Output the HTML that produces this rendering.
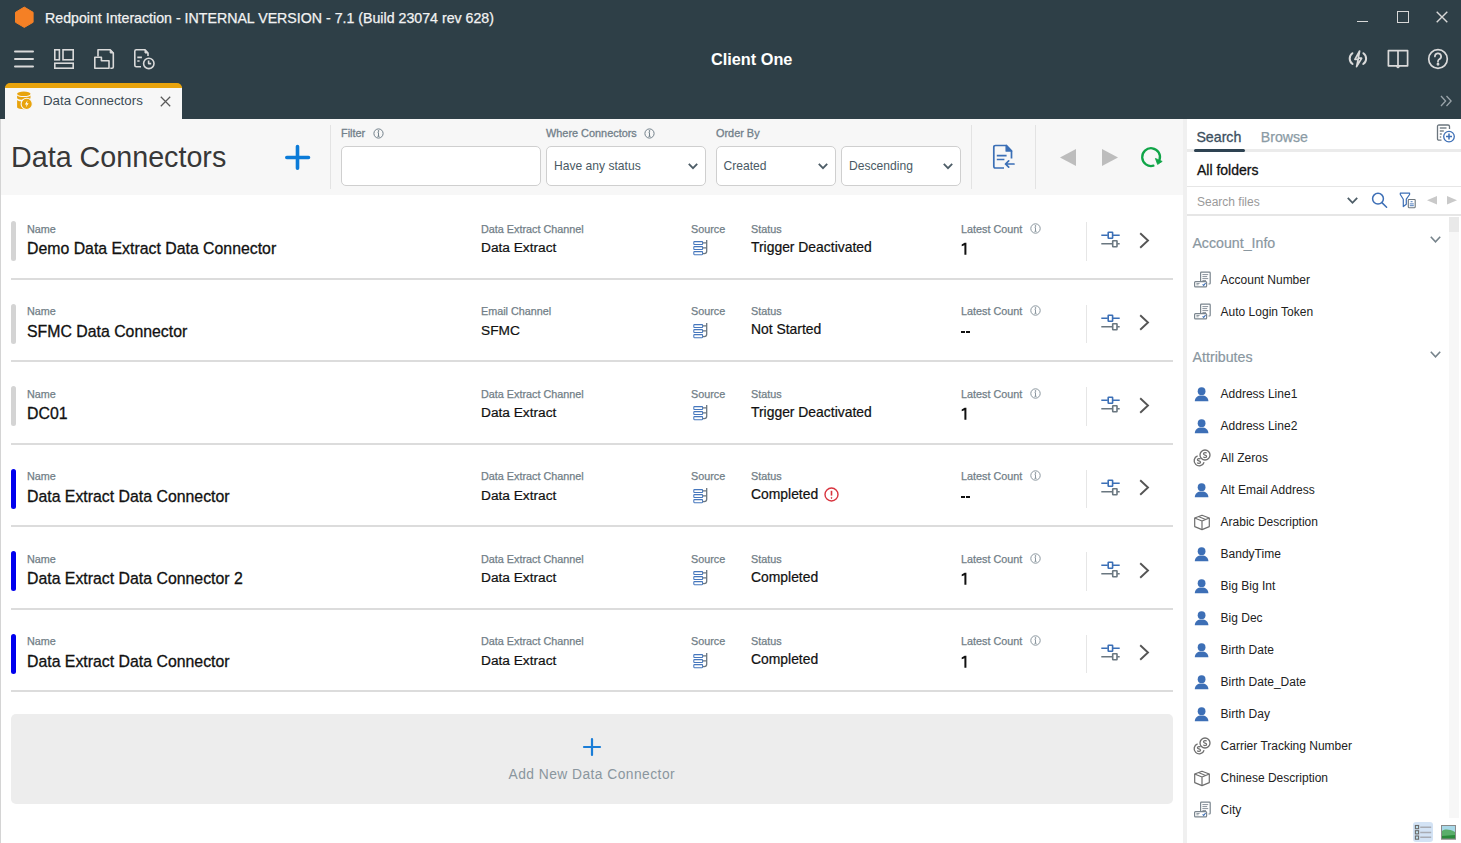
<!DOCTYPE html>
<html><head><meta charset="utf-8">
<style>
*{margin:0;padding:0;box-sizing:border-box}
html,body{width:1461px;height:843px;overflow:hidden}
body{position:relative;background:#2e3f47;font-family:"Liberation Sans",sans-serif}
.a{position:absolute}
.t{position:absolute;white-space:nowrap;line-height:1}
.m{-webkit-text-stroke:0.3px currentColor}
.m2{-webkit-text-stroke:0.22px currentColor}
svg{position:absolute;overflow:visible}
</style></head><body>
<svg style="left:14px;top:6px" width="20" height="23" viewBox="0 0 20 23"><polygon points="10.3,1.1 19.1,6.3 19.1,16.3 10.3,21.4 1.5,16.3 1.5,6.3" fill="#f58025" stroke="#f58025" stroke-width="1" stroke-linejoin="round"/></svg>
<div class="t" id="title" style="left:45px;top:11.28px;font-size:14.2px;color:#f2f2f2;-webkit-text-stroke:0.25px #f2f2f2">Redpoint Interaction - INTERNAL VERSION - 7.1 (Build 23074 rev 628)</div>
<div class="a" style="left:1357px;top:20.7px;width:11px;height:1.4px;background:#d8d8d8"></div>
<div class="a" style="left:1397px;top:11px;width:11.5px;height:11.5px;border:1.4px solid #d8d8d8"></div>
<svg style="left:1436px;top:11px" width="12" height="12" viewBox="0 0 12 12"><path d="M0.7 0.7L11.3 11.3M11.3 0.7L0.7 11.3" stroke="#d8d8d8" stroke-width="1.4"/></svg>
<svg style="left:14px;top:50px" width="20" height="18" viewBox="0 0 20 18"><path d="M1 1.6H19M1 9H19M1 16.5H19" stroke="#dadada" stroke-width="2" stroke-linecap="round"/></svg>
<svg style="left:53px;top:48px" width="22" height="22" viewBox="0 0 22 22" fill="none" stroke="#dadada" stroke-width="1.6"><rect x="1.8" y="1.8" width="4.6" height="10"/><rect x="10" y="1.8" width="10.2" height="10"/><rect x="1.8" y="15.2" width="18.4" height="5"/></svg>
<svg style="left:93px;top:48px" width="22" height="22" viewBox="0 0 22 22" fill="none" stroke="#dadada" stroke-width="1.6" stroke-linejoin="round"><path d="M5 8.5V1.8H17.2L20.3 5V19Q20.3 20.2 19 20.2H17.3"/><path d="M17.2 1.8V5H20.3Z" fill="#dadada" stroke-width="1"/><path d="M1.8 9.2H8.4V12.8H16V20.2H1.8Z"/></svg>
<svg style="left:133px;top:48px" width="23" height="22" viewBox="0 0 23 22" fill="none" stroke="#dadada" stroke-width="1.6" stroke-linejoin="round"><path d="M8 18.8H3.3Q1.8 18.8 1.8 17.3V3.3Q1.8 1.8 3.3 1.8H12L15 5V8"/><path d="M12 1.8V5H15Z" fill="#dadada" stroke-width="1"/><path d="M4.3 9.4H8.9M4.3 13H6.6"/><circle cx="15.8" cy="15.4" r="5.2"/><path d="M15.6 12.4V15.6H18.2"/></svg>
<div class="t" id="client" style="left:711px;top:50.80px;font-size:16.3px;color:#ffffff;font-weight:bold">Client One</div>
<svg style="left:1347px;top:49px" width="23" height="20" viewBox="0 0 23 20" fill="none" stroke="#dadada" stroke-width="2" stroke-linecap="round" stroke-linejoin="round"><path d="M5.4 4.2A6.6 6.6 0 0 0 5.6 15"/><path d="M16.4 4.2A6.6 6.6 0 0 1 16.2 15"/><path d="M12.6 2L7.9 10.3H11.2L9.6 17.6L14.6 9.2H11.3Z" stroke-width="1.7"/></svg>
<svg style="left:1387px;top:49px" width="22" height="20" viewBox="0 0 22 20" fill="none" stroke="#dadada" stroke-width="1.7" stroke-linejoin="round"><path d="M1.4 1.6H20.6V16.8H1.4Z"/><path d="M11 1.6V16.8"/><path d="M9.4 17.2L11 18.6L12.6 17.2" stroke-width="1.4"/></svg>
<svg style="left:1427px;top:48px" width="22" height="22" viewBox="0 0 22 22" fill="none" stroke="#dadada" stroke-width="1.7"><circle cx="11" cy="11" r="9.3"/><path d="M7.9 8.5A3.1 3.1 0 1 1 12.3 11.3C11.4 11.8 11 12.3 11 13.3V13.8" stroke-linecap="round"/><circle cx="11" cy="16.3" r="0.6" fill="#dadada"/></svg>
<div class="a" style="left:5px;top:83px;width:177px;height:36px;background:#f7f7f7;border-top:5px solid #e8a30c;border-radius:5px 5px 0 0"></div>
<svg style="left:16px;top:91px" width="18" height="20" viewBox="0 0 18 20"><ellipse cx="7.8" cy="2.8" rx="6.7" ry="2.3" fill="#e8a30c"/><path d="M1.1 4.6C2.5 6.6 13.1 6.6 14.5 4.6V7.2C13.1 9.2 2.5 9.2 1.1 7.2Z" fill="#e8a30c"/><path d="M1.1 9.1C2.5 11 9 11 11 10.5V17.8C9 18.5 2.5 18.4 1.1 16.6Z" fill="#e8a30c"/><circle cx="10.7" cy="12.9" r="5.6" fill="#e8a30c" stroke="#f7f7f7" stroke-width="1.1"/><path d="M11.6 9.3L8.9 13.4H10.7L9.8 16.6L12.6 12.3H10.8Z" fill="#fff"/></svg>
<div class="t" id="tabtxt" style="left:43px;top:94.44px;font-size:13.3px;color:#3b4b55;">Data Connectors</div>
<svg style="left:160px;top:95.6px" width="11" height="11" viewBox="0 0 11 11"><path d="M0.8 0.8L10.2 10.2M10.2 0.8L0.8 10.2" stroke="#5a5a5a" stroke-width="1.25"/></svg>
<svg style="left:1440px;top:95px" width="13" height="12" viewBox="0 0 13 12" fill="none" stroke="#9aa4aa" stroke-width="1.3"><path d="M1 1L5.6 6L1 11M6.5 1L11.1 6L6.5 11"/></svg>
<div class="a" style="left:0;top:119px;width:1183px;height:724px;background:#fff"></div>
<div class="a" style="left:0;top:119px;width:1.2px;height:724px;background:#d4d4d4"></div>
<div class="a" style="left:1.2px;top:119px;width:1181.8px;height:76px;background:#f7f7f7"></div>
<div class="a" style="left:1183px;top:119px;width:4px;height:724px;background:#f0f0f0"></div>
<div class="a" style="left:1187px;top:119px;width:274px;height:724px;background:#fff"></div>
<div class="t" id="heading" style="left:11px;top:142.61px;font-size:28.7px;color:#383838;">Data Connectors</div>
<svg style="left:284px;top:143.6px" width="27" height="27" viewBox="0 0 27 27" stroke="#0b7bd8" stroke-width="3.6" stroke-linecap="round"><path d="M13.5 2.6V24.3M2.8 13.5H24.5"/></svg>
<div class="a" style="left:329.5px;top:125px;width:1.2px;height:64px;background:#e3e3e3"></div>
<div class="t" id="lbl_filter" style="left:341px;top:128.07px;font-size:10.9px;color:#72808a;-webkit-text-stroke:0.3px #72808a">Filter</div>
<svg style="left:373px;top:128px" width="11" height="11" viewBox="0 0 11 11" fill="none" stroke="#72808a" stroke-width="1"><circle cx="5.5" cy="5.5" r="4.6"/><path d="M5.5 4.6V8.3M4.5 8.3H6.5M4.6 4.6H5.5" stroke-width="1"/><circle cx="5.5" cy="3" r="0.45" fill="#72808a"/></svg>
<div class="t" id="lbl_where" style="left:546px;top:127.77px;font-size:10.9px;color:#72808a;-webkit-text-stroke:0.3px #72808a">Where Connectors</div>
<svg style="left:643.5px;top:128px" width="11" height="11" viewBox="0 0 11 11" fill="none" stroke="#72808a" stroke-width="1"><circle cx="5.5" cy="5.5" r="4.6"/><path d="M5.5 4.6V8.3M4.5 8.3H6.5M4.6 4.6H5.5" stroke-width="1"/><circle cx="5.5" cy="3" r="0.45" fill="#72808a"/></svg>
<div class="t" id="lbl_order" style="left:716px;top:127.77px;font-size:10.9px;color:#72808a;-webkit-text-stroke:0.3px #72808a">Order By</div>
<div class="a" style="left:341px;top:146px;width:200px;height:40px;background:#fff;border:1px solid #cfcfcf;border-radius:5px"></div>
<div class="a" style="left:545.5px;top:146px;width:160px;height:40px;background:#fff;border:1px solid #cfcfcf;border-radius:5px"></div>
<div class="t" id="sel1" style="left:554px;top:160.26px;font-size:12.1px;color:#4a5a64;">Have any status</div>
<svg style="left:688px;top:162.5px" width="10" height="6" viewBox="0 0 10 6" fill="none" stroke="#4d5d67" stroke-width="1.8"><path d="M0.8 0.8L5.0 5.2L9.2 0.8"/></svg>
<div class="a" style="left:715.5px;top:146px;width:120.5px;height:40px;background:#fff;border:1px solid #cfcfcf;border-radius:5px"></div>
<div class="t" id="sel2" style="left:723.5px;top:160.26px;font-size:12.1px;color:#4a5a64;">Created</div>
<svg style="left:818px;top:162.5px" width="10" height="6" viewBox="0 0 10 6" fill="none" stroke="#4d5d67" stroke-width="1.8"><path d="M0.8 0.8L5.0 5.2L9.2 0.8"/></svg>
<div class="a" style="left:840.5px;top:146px;width:120px;height:40px;background:#fff;border:1px solid #cfcfcf;border-radius:5px"></div>
<div class="t" id="sel3" style="left:849px;top:160.26px;font-size:12.1px;color:#4a5a64;">Descending</div>
<svg style="left:942.5px;top:162.5px" width="10" height="6" viewBox="0 0 10 6" fill="none" stroke="#4d5d67" stroke-width="1.8"><path d="M0.8 0.8L5.0 5.2L9.2 0.8"/></svg>
<div class="a" style="left:970.5px;top:125px;width:1.2px;height:64px;background:#e3e3e3"></div>
<div class="a" style="left:1035px;top:125px;width:1.2px;height:64px;background:#e3e3e3"></div>
<svg style="left:992px;top:144px" width="23" height="26" viewBox="0 0 23 26" fill="none" stroke="#3b6fb6" stroke-width="1.7" stroke-linejoin="round"><path d="M19.5 14.5V7L14.3 1.5H3.5Q1.8 1.5 1.8 3.2V22.3Q1.8 24 3.5 24H12"/><path d="M14.3 1.5V7H19.5Z" fill="#3b6fb6"/><path d="M4.8 11.7H14.6M4.8 15.5H12.4"/><path d="M22 20H13.5M16.7 16.8L13.5 20L16.7 23.2" stroke-linecap="round"/></svg>
<svg style="left:1060px;top:149px" width="16" height="17" viewBox="0 0 16 17"><path d="M16 0V17L0 8.5Z" fill="#bdbdbd"/></svg>
<svg style="left:1101.5px;top:149px" width="16" height="17" viewBox="0 0 16 17"><path d="M0 0V17L16 8.5Z" fill="#bdbdbd"/></svg>
<svg style="left:1140px;top:146px" width="24" height="22" viewBox="0 0 24 22" fill="none"><path d="M13.4 19.7A8.9 8.9 0 1 1 19.5 14" stroke="#10a548" stroke-width="2.3" stroke-linecap="round"/><path d="M15.4 12.4L22.2 15.4L17.6 18.4Z" fill="#10a548" stroke="#10a548" stroke-width="0.8" stroke-linejoin="round"/></svg>
<div class="a" style="left:10.8px;top:221.4px;width:5.6px;height:40px;background:#d4d4d4;border-radius:3px"></div>
<div class="t" id="r0_lbl" style="left:27px;top:223.56px;font-size:10.8px;color:#717e87;-webkit-text-stroke:0.25px #717e87">Name</div>
<div class="t m" id="r0_name" style="left:27px;top:241.38px;font-size:15.85px;color:#111;">Demo Data Extract Data Connector</div>
<div class="t" id="r0_chl" style="left:481px;top:223.56px;font-size:10.8px;color:#717e87;-webkit-text-stroke:0.25px #717e87">Data Extract Channel</div>
<div class="t m2" id="r0_chv" style="left:481px;top:241.00px;font-size:13.7px;color:#111;">Data Extract</div>
<div class="t" id="r0_src" style="left:691px;top:223.56px;font-size:10.8px;color:#717e87;-webkit-text-stroke:0.25px #717e87">Source</div>
<svg style="left:692px;top:239.0px" width="16" height="18" viewBox="0 0 16 18" fill="none"><g stroke="#4677bd" stroke-width="1.05"><rect x="1.8" y="2.6" width="8.8" height="2.9" rx="0.6"/><rect x="1.8" y="7.6" width="8.8" height="2.9" rx="0.6"/><rect x="1.8" y="12.6" width="8.8" height="3.1" rx="0.6"/></g><path d="M14.7 1V12.2Q14.7 14.6 12.2 14.6H10.8M10.8 3.9H14.7M10.8 8.9H14.7" stroke="#6b7780" stroke-width="1.3"/></svg>
<div class="t" id="r0_stl" style="left:751px;top:223.56px;font-size:10.8px;color:#717e87;-webkit-text-stroke:0.25px #717e87">Status</div>
<div class="t m2" id="r0_st" style="left:751px;top:240.63px;font-size:13.9px;color:#111;">Trigger Deactivated</div>
<div class="t" id="r0_lcl" style="left:961px;top:223.56px;font-size:10.8px;color:#717e87;-webkit-text-stroke:0.25px #717e87">Latest Count</div>
<svg style="left:1030.3px;top:222.8px" width="11" height="11" viewBox="0 0 11 11" fill="none" stroke="#8a969e" stroke-width="1"><circle cx="5.5" cy="5.5" r="4.7"/><path d="M5.5 4.6V8.3M4.5 8.3H6.5M4.6 4.6H5.5" stroke-width="1"/><circle cx="5.5" cy="3" r="0.45" fill="#8a969e"/></svg>
<svg style="left:961px;top:242.0px" width="7" height="14" viewBox="0 0 7 14" fill="#111"><path d="M3.6 0.7H5.4V12.7H3.4V3.3L0.7 4.3V2.5Z"/></svg>
<div class="a" style="left:1085.5px;top:222.3px;width:1.2px;height:38.5px;background:#e6e6e6"></div>
<svg style="left:1101px;top:231.0px" width="20" height="17" viewBox="0 0 20 17" fill="none" stroke-width="1.6"><path d="M0.3 4.2H6.8M11.8 4.2H18.7" stroke="#3b6fb6"/><rect x="7.2" y="1.2" width="4.4" height="6" stroke="#3b6fb6" rx="0.4"/><path d="M0.3 12.7H11.3M16.2 12.7H18.7" stroke="#6a7780"/><rect x="11.7" y="9.7" width="4.3" height="6" stroke="#6a7780" rx="0.4"/></svg>
<svg style="left:1139px;top:231.5px" width="11" height="17" viewBox="0 0 11 17" fill="none" stroke="#555" stroke-width="1.9"><path d="M1.2 1.2L9 8.5L1.2 15.8"/></svg>
<div class="a" style="left:11px;top:277.5px;width:1161.5px;height:2px;background:#dcdcdc"></div>
<div class="a" style="left:10.8px;top:303.9px;width:5.6px;height:40px;background:#d4d4d4;border-radius:3px"></div>
<div class="t" style="left:27px;top:306.06px;font-size:10.8px;color:#717e87;-webkit-text-stroke:0.25px #717e87">Name</div>
<div class="t m" id="r1_name" style="left:27px;top:323.88px;font-size:15.85px;color:#111;">SFMC Data Connector</div>
<div class="t" style="left:481px;top:306.06px;font-size:10.8px;color:#717e87;-webkit-text-stroke:0.25px #717e87">Email Channel</div>
<div class="t m2" style="left:481px;top:323.50px;font-size:13.7px;color:#111;">SFMC</div>
<div class="t" style="left:691px;top:306.06px;font-size:10.8px;color:#717e87;-webkit-text-stroke:0.25px #717e87">Source</div>
<svg style="left:692px;top:321.5px" width="16" height="18" viewBox="0 0 16 18" fill="none"><g stroke="#4677bd" stroke-width="1.05"><rect x="1.8" y="2.6" width="8.8" height="2.9" rx="0.6"/><rect x="1.8" y="7.6" width="8.8" height="2.9" rx="0.6"/><rect x="1.8" y="12.6" width="8.8" height="3.1" rx="0.6"/></g><path d="M14.7 1V12.2Q14.7 14.6 12.2 14.6H10.8M10.8 3.9H14.7M10.8 8.9H14.7" stroke="#6b7780" stroke-width="1.3"/></svg>
<div class="t" style="left:751px;top:306.06px;font-size:10.8px;color:#717e87;-webkit-text-stroke:0.25px #717e87">Status</div>
<div class="t m2" id="r1_st" style="left:751px;top:323.13px;font-size:13.9px;color:#111;">Not Started</div>
<div class="t" style="left:961px;top:306.06px;font-size:10.8px;color:#717e87;-webkit-text-stroke:0.25px #717e87">Latest Count</div>
<svg style="left:1030.3px;top:305.3px" width="11" height="11" viewBox="0 0 11 11" fill="none" stroke="#8a969e" stroke-width="1"><circle cx="5.5" cy="5.5" r="4.7"/><path d="M5.5 4.6V8.3M4.5 8.3H6.5M4.6 4.6H5.5" stroke-width="1"/><circle cx="5.5" cy="3" r="0.45" fill="#8a969e"/></svg>
<div class="a" style="left:961px;top:331.3px;width:4px;height:1.9px;background:#111"></div><div class="a" style="left:966.4px;top:331.3px;width:4px;height:1.9px;background:#111"></div>
<div class="a" style="left:1085.5px;top:304.8px;width:1.2px;height:38.5px;background:#e6e6e6"></div>
<svg style="left:1101px;top:313.5px" width="20" height="17" viewBox="0 0 20 17" fill="none" stroke-width="1.6"><path d="M0.3 4.2H6.8M11.8 4.2H18.7" stroke="#3b6fb6"/><rect x="7.2" y="1.2" width="4.4" height="6" stroke="#3b6fb6" rx="0.4"/><path d="M0.3 12.7H11.3M16.2 12.7H18.7" stroke="#6a7780"/><rect x="11.7" y="9.7" width="4.3" height="6" stroke="#6a7780" rx="0.4"/></svg>
<svg style="left:1139px;top:314.0px" width="11" height="17" viewBox="0 0 11 17" fill="none" stroke="#555" stroke-width="1.9"><path d="M1.2 1.2L9 8.5L1.2 15.8"/></svg>
<div class="a" style="left:11px;top:360.0px;width:1161.5px;height:2px;background:#dcdcdc"></div>
<div class="a" style="left:10.8px;top:386.4px;width:5.6px;height:40px;background:#d4d4d4;border-radius:3px"></div>
<div class="t" style="left:27px;top:388.56px;font-size:10.8px;color:#717e87;-webkit-text-stroke:0.25px #717e87">Name</div>
<div class="t m" id="r2_name" style="left:27px;top:406.38px;font-size:15.85px;color:#111;">DC01</div>
<div class="t" style="left:481px;top:388.56px;font-size:10.8px;color:#717e87;-webkit-text-stroke:0.25px #717e87">Data Extract Channel</div>
<div class="t m2" style="left:481px;top:406.00px;font-size:13.7px;color:#111;">Data Extract</div>
<div class="t" style="left:691px;top:388.56px;font-size:10.8px;color:#717e87;-webkit-text-stroke:0.25px #717e87">Source</div>
<svg style="left:692px;top:404.0px" width="16" height="18" viewBox="0 0 16 18" fill="none"><g stroke="#4677bd" stroke-width="1.05"><rect x="1.8" y="2.6" width="8.8" height="2.9" rx="0.6"/><rect x="1.8" y="7.6" width="8.8" height="2.9" rx="0.6"/><rect x="1.8" y="12.6" width="8.8" height="3.1" rx="0.6"/></g><path d="M14.7 1V12.2Q14.7 14.6 12.2 14.6H10.8M10.8 3.9H14.7M10.8 8.9H14.7" stroke="#6b7780" stroke-width="1.3"/></svg>
<div class="t" style="left:751px;top:388.56px;font-size:10.8px;color:#717e87;-webkit-text-stroke:0.25px #717e87">Status</div>
<div class="t m2" style="left:751px;top:405.63px;font-size:13.9px;color:#111;">Trigger Deactivated</div>
<div class="t" style="left:961px;top:388.56px;font-size:10.8px;color:#717e87;-webkit-text-stroke:0.25px #717e87">Latest Count</div>
<svg style="left:1030.3px;top:387.8px" width="11" height="11" viewBox="0 0 11 11" fill="none" stroke="#8a969e" stroke-width="1"><circle cx="5.5" cy="5.5" r="4.7"/><path d="M5.5 4.6V8.3M4.5 8.3H6.5M4.6 4.6H5.5" stroke-width="1"/><circle cx="5.5" cy="3" r="0.45" fill="#8a969e"/></svg>
<svg style="left:961px;top:407.0px" width="7" height="14" viewBox="0 0 7 14" fill="#111"><path d="M3.6 0.7H5.4V12.7H3.4V3.3L0.7 4.3V2.5Z"/></svg>
<div class="a" style="left:1085.5px;top:387.3px;width:1.2px;height:38.5px;background:#e6e6e6"></div>
<svg style="left:1101px;top:396.0px" width="20" height="17" viewBox="0 0 20 17" fill="none" stroke-width="1.6"><path d="M0.3 4.2H6.8M11.8 4.2H18.7" stroke="#3b6fb6"/><rect x="7.2" y="1.2" width="4.4" height="6" stroke="#3b6fb6" rx="0.4"/><path d="M0.3 12.7H11.3M16.2 12.7H18.7" stroke="#6a7780"/><rect x="11.7" y="9.7" width="4.3" height="6" stroke="#6a7780" rx="0.4"/></svg>
<svg style="left:1139px;top:396.5px" width="11" height="17" viewBox="0 0 11 17" fill="none" stroke="#555" stroke-width="1.9"><path d="M1.2 1.2L9 8.5L1.2 15.8"/></svg>
<div class="a" style="left:11px;top:442.5px;width:1161.5px;height:2px;background:#dcdcdc"></div>
<div class="a" style="left:10.8px;top:468.9px;width:5.6px;height:40px;background:#0000ee;border-radius:3px"></div>
<div class="t" style="left:27px;top:471.06px;font-size:10.8px;color:#717e87;-webkit-text-stroke:0.25px #717e87">Name</div>
<div class="t m" id="r3_name" style="left:27px;top:488.88px;font-size:15.85px;color:#111;">Data Extract Data Connector</div>
<div class="t" style="left:481px;top:471.06px;font-size:10.8px;color:#717e87;-webkit-text-stroke:0.25px #717e87">Data Extract Channel</div>
<div class="t m2" style="left:481px;top:488.50px;font-size:13.7px;color:#111;">Data Extract</div>
<div class="t" style="left:691px;top:471.06px;font-size:10.8px;color:#717e87;-webkit-text-stroke:0.25px #717e87">Source</div>
<svg style="left:692px;top:486.5px" width="16" height="18" viewBox="0 0 16 18" fill="none"><g stroke="#4677bd" stroke-width="1.05"><rect x="1.8" y="2.6" width="8.8" height="2.9" rx="0.6"/><rect x="1.8" y="7.6" width="8.8" height="2.9" rx="0.6"/><rect x="1.8" y="12.6" width="8.8" height="3.1" rx="0.6"/></g><path d="M14.7 1V12.2Q14.7 14.6 12.2 14.6H10.8M10.8 3.9H14.7M10.8 8.9H14.7" stroke="#6b7780" stroke-width="1.3"/></svg>
<div class="t" style="left:751px;top:471.06px;font-size:10.8px;color:#717e87;-webkit-text-stroke:0.25px #717e87">Status</div>
<div class="t m2" id="r3_st" style="left:751px;top:488.13px;font-size:13.9px;color:#111;">Completed</div>
<svg style="left:823.5px;top:486.5px" width="15" height="15" viewBox="0 0 15 15" fill="none" stroke="#d8343f" stroke-width="1.4"><circle cx="7.5" cy="7.5" r="6.5"/><path d="M7.5 3.8V8.6" stroke-width="1.6"/><circle cx="7.5" cy="10.9" r="0.5" fill="#d8343f" stroke-width="0.8"/></svg>
<div class="t" style="left:961px;top:471.06px;font-size:10.8px;color:#717e87;-webkit-text-stroke:0.25px #717e87">Latest Count</div>
<svg style="left:1030.3px;top:470.3px" width="11" height="11" viewBox="0 0 11 11" fill="none" stroke="#8a969e" stroke-width="1"><circle cx="5.5" cy="5.5" r="4.7"/><path d="M5.5 4.6V8.3M4.5 8.3H6.5M4.6 4.6H5.5" stroke-width="1"/><circle cx="5.5" cy="3" r="0.45" fill="#8a969e"/></svg>
<div class="a" style="left:961px;top:496.3px;width:4px;height:1.9px;background:#111"></div><div class="a" style="left:966.4px;top:496.3px;width:4px;height:1.9px;background:#111"></div>
<div class="a" style="left:1085.5px;top:469.8px;width:1.2px;height:38.5px;background:#e6e6e6"></div>
<svg style="left:1101px;top:478.5px" width="20" height="17" viewBox="0 0 20 17" fill="none" stroke-width="1.6"><path d="M0.3 4.2H6.8M11.8 4.2H18.7" stroke="#3b6fb6"/><rect x="7.2" y="1.2" width="4.4" height="6" stroke="#3b6fb6" rx="0.4"/><path d="M0.3 12.7H11.3M16.2 12.7H18.7" stroke="#6a7780"/><rect x="11.7" y="9.7" width="4.3" height="6" stroke="#6a7780" rx="0.4"/></svg>
<svg style="left:1139px;top:479.0px" width="11" height="17" viewBox="0 0 11 17" fill="none" stroke="#555" stroke-width="1.9"><path d="M1.2 1.2L9 8.5L1.2 15.8"/></svg>
<div class="a" style="left:11px;top:525.0px;width:1161.5px;height:2px;background:#dcdcdc"></div>
<div class="a" style="left:10.8px;top:551.4px;width:5.6px;height:40px;background:#0000ee;border-radius:3px"></div>
<div class="t" style="left:27px;top:553.56px;font-size:10.8px;color:#717e87;-webkit-text-stroke:0.25px #717e87">Name</div>
<div class="t m" id="r4_name" style="left:27px;top:571.38px;font-size:15.85px;color:#111;">Data Extract Data Connector 2</div>
<div class="t" style="left:481px;top:553.56px;font-size:10.8px;color:#717e87;-webkit-text-stroke:0.25px #717e87">Data Extract Channel</div>
<div class="t m2" style="left:481px;top:571.00px;font-size:13.7px;color:#111;">Data Extract</div>
<div class="t" style="left:691px;top:553.56px;font-size:10.8px;color:#717e87;-webkit-text-stroke:0.25px #717e87">Source</div>
<svg style="left:692px;top:569.0px" width="16" height="18" viewBox="0 0 16 18" fill="none"><g stroke="#4677bd" stroke-width="1.05"><rect x="1.8" y="2.6" width="8.8" height="2.9" rx="0.6"/><rect x="1.8" y="7.6" width="8.8" height="2.9" rx="0.6"/><rect x="1.8" y="12.6" width="8.8" height="3.1" rx="0.6"/></g><path d="M14.7 1V12.2Q14.7 14.6 12.2 14.6H10.8M10.8 3.9H14.7M10.8 8.9H14.7" stroke="#6b7780" stroke-width="1.3"/></svg>
<div class="t" style="left:751px;top:553.56px;font-size:10.8px;color:#717e87;-webkit-text-stroke:0.25px #717e87">Status</div>
<div class="t m2" style="left:751px;top:570.63px;font-size:13.9px;color:#111;">Completed</div>
<div class="t" style="left:961px;top:553.56px;font-size:10.8px;color:#717e87;-webkit-text-stroke:0.25px #717e87">Latest Count</div>
<svg style="left:1030.3px;top:552.8px" width="11" height="11" viewBox="0 0 11 11" fill="none" stroke="#8a969e" stroke-width="1"><circle cx="5.5" cy="5.5" r="4.7"/><path d="M5.5 4.6V8.3M4.5 8.3H6.5M4.6 4.6H5.5" stroke-width="1"/><circle cx="5.5" cy="3" r="0.45" fill="#8a969e"/></svg>
<svg style="left:961px;top:572.0px" width="7" height="14" viewBox="0 0 7 14" fill="#111"><path d="M3.6 0.7H5.4V12.7H3.4V3.3L0.7 4.3V2.5Z"/></svg>
<div class="a" style="left:1085.5px;top:552.3px;width:1.2px;height:38.5px;background:#e6e6e6"></div>
<svg style="left:1101px;top:561.0px" width="20" height="17" viewBox="0 0 20 17" fill="none" stroke-width="1.6"><path d="M0.3 4.2H6.8M11.8 4.2H18.7" stroke="#3b6fb6"/><rect x="7.2" y="1.2" width="4.4" height="6" stroke="#3b6fb6" rx="0.4"/><path d="M0.3 12.7H11.3M16.2 12.7H18.7" stroke="#6a7780"/><rect x="11.7" y="9.7" width="4.3" height="6" stroke="#6a7780" rx="0.4"/></svg>
<svg style="left:1139px;top:561.5px" width="11" height="17" viewBox="0 0 11 17" fill="none" stroke="#555" stroke-width="1.9"><path d="M1.2 1.2L9 8.5L1.2 15.8"/></svg>
<div class="a" style="left:11px;top:607.5px;width:1161.5px;height:2px;background:#dcdcdc"></div>
<div class="a" style="left:10.8px;top:633.9px;width:5.6px;height:40px;background:#0000ee;border-radius:3px"></div>
<div class="t" style="left:27px;top:636.06px;font-size:10.8px;color:#717e87;-webkit-text-stroke:0.25px #717e87">Name</div>
<div class="t m" id="r5_name" style="left:27px;top:653.88px;font-size:15.85px;color:#111;">Data Extract Data Connector</div>
<div class="t" style="left:481px;top:636.06px;font-size:10.8px;color:#717e87;-webkit-text-stroke:0.25px #717e87">Data Extract Channel</div>
<div class="t m2" style="left:481px;top:653.50px;font-size:13.7px;color:#111;">Data Extract</div>
<div class="t" style="left:691px;top:636.06px;font-size:10.8px;color:#717e87;-webkit-text-stroke:0.25px #717e87">Source</div>
<svg style="left:692px;top:651.5px" width="16" height="18" viewBox="0 0 16 18" fill="none"><g stroke="#4677bd" stroke-width="1.05"><rect x="1.8" y="2.6" width="8.8" height="2.9" rx="0.6"/><rect x="1.8" y="7.6" width="8.8" height="2.9" rx="0.6"/><rect x="1.8" y="12.6" width="8.8" height="3.1" rx="0.6"/></g><path d="M14.7 1V12.2Q14.7 14.6 12.2 14.6H10.8M10.8 3.9H14.7M10.8 8.9H14.7" stroke="#6b7780" stroke-width="1.3"/></svg>
<div class="t" style="left:751px;top:636.06px;font-size:10.8px;color:#717e87;-webkit-text-stroke:0.25px #717e87">Status</div>
<div class="t m2" style="left:751px;top:653.13px;font-size:13.9px;color:#111;">Completed</div>
<div class="t" style="left:961px;top:636.06px;font-size:10.8px;color:#717e87;-webkit-text-stroke:0.25px #717e87">Latest Count</div>
<svg style="left:1030.3px;top:635.3px" width="11" height="11" viewBox="0 0 11 11" fill="none" stroke="#8a969e" stroke-width="1"><circle cx="5.5" cy="5.5" r="4.7"/><path d="M5.5 4.6V8.3M4.5 8.3H6.5M4.6 4.6H5.5" stroke-width="1"/><circle cx="5.5" cy="3" r="0.45" fill="#8a969e"/></svg>
<svg style="left:961px;top:654.5px" width="7" height="14" viewBox="0 0 7 14" fill="#111"><path d="M3.6 0.7H5.4V12.7H3.4V3.3L0.7 4.3V2.5Z"/></svg>
<div class="a" style="left:1085.5px;top:634.8px;width:1.2px;height:38.5px;background:#e6e6e6"></div>
<svg style="left:1101px;top:643.5px" width="20" height="17" viewBox="0 0 20 17" fill="none" stroke-width="1.6"><path d="M0.3 4.2H6.8M11.8 4.2H18.7" stroke="#3b6fb6"/><rect x="7.2" y="1.2" width="4.4" height="6" stroke="#3b6fb6" rx="0.4"/><path d="M0.3 12.7H11.3M16.2 12.7H18.7" stroke="#6a7780"/><rect x="11.7" y="9.7" width="4.3" height="6" stroke="#6a7780" rx="0.4"/></svg>
<svg style="left:1139px;top:644.0px" width="11" height="17" viewBox="0 0 11 17" fill="none" stroke="#555" stroke-width="1.9"><path d="M1.2 1.2L9 8.5L1.2 15.8"/></svg>
<div class="a" style="left:11px;top:690.0px;width:1161.5px;height:2px;background:#dcdcdc"></div>
<div class="a" style="left:11px;top:714px;width:1161.5px;height:90px;background:#ededed;border-radius:5px"></div>
<svg style="left:582.5px;top:738px" width="18" height="18" viewBox="0 0 18 18" stroke="#1a7dd7" stroke-width="2.2" stroke-linecap="round"><path d="M9 1V17M1 9H17"/></svg>
<div class="t" id="addtxt" style="left:508.5px;top:767.52px;font-size:13.8px;color:#8a969e;letter-spacing:0.46px">Add New Data Connector</div>
<div class="t" id="sb_search" style="left:1196.4px;top:129.68px;font-size:14.2px;color:#3d5060;-webkit-text-stroke:0.3px #3d5060">Search</div>
<div class="t" id="sb_browse" style="left:1260.7px;top:129.68px;font-size:14.2px;color:#8b9ba5;-webkit-text-stroke:0.25px #8b9ba5">Browse</div>
<svg style="left:1436px;top:124px" width="20" height="20" viewBox="0 0 20 20" fill="none"><path d="M5.5 16.2H3Q1.5 16.2 1.5 14.7V2.5Q1.5 1 3 1H12Q13.5 1 13.5 2.5V5" stroke="#6b757d" stroke-width="1.3"/><path d="M3.8 4H10.5M3.8 7H7.8M3.8 10H5.8M3.8 13H5.2" stroke="#7b858d" stroke-width="1.5"/><circle cx="13" cy="12.6" r="5.3" fill="#fff" stroke="#3d6fb6" stroke-width="1.3"/><path d="M13 9.6V15.6M10 12.6H16" stroke="#3d6fb6" stroke-width="1.5"/></svg>
<div class="a" style="left:1187px;top:149px;width:274px;height:3px;background:#ebebeb"></div>
<div class="a" style="left:1194px;top:149px;width:51px;height:3px;background:#2e4352;border-radius:1.5px"></div>
<div class="t m" id="sb_all" style="left:1197px;top:163.15px;font-size:14px;color:#111;">All folders</div>
<div class="a" style="left:1187px;top:185.5px;width:274px;height:1.3px;background:#e6e6e6"></div>
<div class="t" id="sb_sf" style="left:1197px;top:195.64px;font-size:12px;color:#9a9a9a;">Search files</div>
<svg style="left:1346.5px;top:196.5px" width="11" height="7" viewBox="0 0 11 7" fill="none" stroke="#4d5d67" stroke-width="1.8"><path d="M0.8 0.8L5.5 5.8L10.2 0.8"/></svg>
<svg style="left:1371px;top:192px" width="18" height="17" viewBox="0 0 18 17" fill="none" stroke="#3d6fb6" stroke-width="1.5"><circle cx="7" cy="6.7" r="5.4"/><path d="M10.9 10.6L15.6 15.3" stroke-linecap="round"/></svg>
<svg style="left:1399px;top:192px" width="18" height="17" viewBox="0 0 18 17" fill="none"><path d="M1.3 1.2H10.6V2.5L7.3 7.2V12.3L4.3 14.6V7.2L1.3 2.5Z" stroke="#3d6fb6" stroke-width="1.2" stroke-linejoin="round"/><rect x="9.3" y="7.5" width="6.9" height="8.2" rx="0.6" fill="#fff" stroke="#6b757d" stroke-width="1.1"/><path d="M11.6 9.7H13.6M10.8 11.9H14.8M10.8 13.7H14.8" stroke="#3d6fb6" stroke-width="0.9"/></svg>
<svg style="left:1426.5px;top:196px" width="10" height="8.5" viewBox="0 0 10 8.5"><path d="M10 0V8.5L0 4.25Z" fill="#c9c9c9"/></svg>
<svg style="left:1447px;top:196px" width="10" height="8.5" viewBox="0 0 10 8.5"><path d="M0 0V8.5L10 4.25Z" fill="#c9c9c9"/></svg>
<div class="a" style="left:1187px;top:214.3px;width:274px;height:1.3px;background:#e6e6e6"></div>
<div class="a" style="left:1448.5px;top:217px;width:10px;height:601px;background:#f7f7f7"></div>
<div class="a" style="left:1448.5px;top:217px;width:10px;height:15px;background:#e9e9e9"></div>
<div class="t" id="sb_acc" style="left:1192.4px;top:235.78px;font-size:14.2px;color:#8a979f;-webkit-text-stroke:0.2px #8a979f">Account_Info</div>
<svg style="left:1429.5px;top:235.8px" width="11" height="7" viewBox="0 0 11 7" fill="none" stroke="#76838b" stroke-width="1.6"><path d="M0.8 0.8L5.5 5.8L10.2 0.8"/></svg>
<div class="t" id="sb_attr" style="left:1192.6px;top:350.38px;font-size:14.2px;color:#8a979f;-webkit-text-stroke:0.2px #8a979f">Attributes</div>
<svg style="left:1429.5px;top:350.5px" width="11" height="7" viewBox="0 0 11 7" fill="none" stroke="#76838b" stroke-width="1.6"><path d="M0.8 0.8L5.5 5.8L10.2 0.8"/></svg>
<svg style="left:1193px;top:270.5px" width="19" height="17" viewBox="0 0 19 17" fill="none"><path d="M7.6 11V2Q7.6 1.2 8.4 1.2H16.4Q17.2 1.2 17.2 2V12.2Q17.2 13 16.4 13H15.5" stroke="#7a858e" stroke-width="1.2"/><path d="M9.4 3.6H15.2M9.4 5.6H14.2M9.4 7.6H15.2M9.4 9.6H13" stroke="#7a858e" stroke-width="0.9"/><rect x="1.6" y="10.6" width="12" height="5.2" rx="0.9" fill="#fff" stroke="#7a858e" stroke-width="1.2"/><path d="M3.4 12.5H6.6M3.4 13.8H5.6" stroke="#7a858e" stroke-width="0.8"/><path d="M9.6 13.4L10.7 14.4L12.6 12" stroke="#3d6fb6" stroke-width="1.1"/></svg>
<div class="t" id="sb_an" style="left:1220.6px;top:273.84px;font-size:12px;color:#222;">Account Number</div>
<svg style="left:1193px;top:302.5px" width="19" height="17" viewBox="0 0 19 17" fill="none"><path d="M7.6 11V2Q7.6 1.2 8.4 1.2H16.4Q17.2 1.2 17.2 2V12.2Q17.2 13 16.4 13H15.5" stroke="#7a858e" stroke-width="1.2"/><path d="M9.4 3.6H15.2M9.4 5.6H14.2M9.4 7.6H15.2M9.4 9.6H13" stroke="#7a858e" stroke-width="0.9"/><rect x="1.6" y="10.6" width="12" height="5.2" rx="0.9" fill="#fff" stroke="#7a858e" stroke-width="1.2"/><path d="M3.4 12.5H6.6M3.4 13.8H5.6" stroke="#7a858e" stroke-width="0.8"/><path d="M9.6 13.4L10.7 14.4L12.6 12" stroke="#3d6fb6" stroke-width="1.1"/></svg>
<div class="t" style="left:1220.6px;top:305.84px;font-size:12px;color:#222;">Auto Login Token</div>
<svg style="left:1194px;top:387.0px" width="16" height="15" viewBox="0 0 16 15"><circle cx="7.6" cy="4.2" r="3.9" fill="#3d6fb6"/><path d="M0.8 14.2C1 10.5 3.5 8.6 7.6 8.6C11.7 8.6 14.2 10.5 14.4 14.2Z" fill="#3d6fb6"/></svg>
<div class="t" style="left:1220.6px;top:388.34px;font-size:12px;color:#222;">Address Line1</div>
<svg style="left:1194px;top:419.0px" width="16" height="15" viewBox="0 0 16 15"><circle cx="7.6" cy="4.2" r="3.9" fill="#3d6fb6"/><path d="M0.8 14.2C1 10.5 3.5 8.6 7.6 8.6C11.7 8.6 14.2 10.5 14.4 14.2Z" fill="#3d6fb6"/></svg>
<div class="t" style="left:1220.6px;top:420.34px;font-size:12px;color:#222;">Address Line2</div>
<svg style="left:1193px;top:449.0px" width="18" height="17" viewBox="0 0 18 17" fill="none" stroke="#6f6f6f" stroke-width="1.35"><circle cx="12" cy="6" r="5"/><path d="M4.6 6.9A5.1 5.1 0 1 0 11.1 13.3"/><path d="M13.6 4.3C13.2 3.5 10.6 3.4 10.5 4.9C10.4 6.3 13.6 5.9 13.6 7.4C13.6 8.8 10.9 8.8 10.3 7.8" stroke-width="1.25"/><path d="M7.5 10.1C7.1 9.3 4.5 9.2 4.4 10.7C4.3 12.1 7.5 11.7 7.5 13.2C7.5 14.6 4.8 14.6 4.2 13.6" stroke-width="1.25"/></svg>
<div class="t" style="left:1220.6px;top:452.34px;font-size:12px;color:#222;">All Zeros</div>
<svg style="left:1194px;top:483.0px" width="16" height="15" viewBox="0 0 16 15"><circle cx="7.6" cy="4.2" r="3.9" fill="#3d6fb6"/><path d="M0.8 14.2C1 10.5 3.5 8.6 7.6 8.6C11.7 8.6 14.2 10.5 14.4 14.2Z" fill="#3d6fb6"/></svg>
<div class="t" style="left:1220.6px;top:484.34px;font-size:12px;color:#222;">Alt Email Address</div>
<svg style="left:1193px;top:513.5px" width="18" height="17" viewBox="0 0 18 17" fill="none" stroke="#6e6e6e" stroke-width="1.2" stroke-linejoin="round"><path d="M9 1.2L16.3 4V12.6L9 15.6L1.7 12.6V4Z"/><path d="M1.7 4L9 7L16.3 4M9 7V15.6"/><path d="M5.4 2.6L12.6 5.5" stroke-width="1.1"/></svg>
<div class="t" style="left:1220.6px;top:516.34px;font-size:12px;color:#222;">Arabic Description</div>
<svg style="left:1194px;top:547.0px" width="16" height="15" viewBox="0 0 16 15"><circle cx="7.6" cy="4.2" r="3.9" fill="#3d6fb6"/><path d="M0.8 14.2C1 10.5 3.5 8.6 7.6 8.6C11.7 8.6 14.2 10.5 14.4 14.2Z" fill="#3d6fb6"/></svg>
<div class="t" style="left:1220.6px;top:548.34px;font-size:12px;color:#222;">BandyTime</div>
<svg style="left:1194px;top:579.0px" width="16" height="15" viewBox="0 0 16 15"><circle cx="7.6" cy="4.2" r="3.9" fill="#3d6fb6"/><path d="M0.8 14.2C1 10.5 3.5 8.6 7.6 8.6C11.7 8.6 14.2 10.5 14.4 14.2Z" fill="#3d6fb6"/></svg>
<div class="t" style="left:1220.6px;top:580.34px;font-size:12px;color:#222;">Big Big Int</div>
<svg style="left:1194px;top:611.0px" width="16" height="15" viewBox="0 0 16 15"><circle cx="7.6" cy="4.2" r="3.9" fill="#3d6fb6"/><path d="M0.8 14.2C1 10.5 3.5 8.6 7.6 8.6C11.7 8.6 14.2 10.5 14.4 14.2Z" fill="#3d6fb6"/></svg>
<div class="t" style="left:1220.6px;top:612.34px;font-size:12px;color:#222;">Big Dec</div>
<svg style="left:1194px;top:643.0px" width="16" height="15" viewBox="0 0 16 15"><circle cx="7.6" cy="4.2" r="3.9" fill="#3d6fb6"/><path d="M0.8 14.2C1 10.5 3.5 8.6 7.6 8.6C11.7 8.6 14.2 10.5 14.4 14.2Z" fill="#3d6fb6"/></svg>
<div class="t" style="left:1220.6px;top:644.34px;font-size:12px;color:#222;">Birth Date</div>
<svg style="left:1194px;top:675.0px" width="16" height="15" viewBox="0 0 16 15"><circle cx="7.6" cy="4.2" r="3.9" fill="#3d6fb6"/><path d="M0.8 14.2C1 10.5 3.5 8.6 7.6 8.6C11.7 8.6 14.2 10.5 14.4 14.2Z" fill="#3d6fb6"/></svg>
<div class="t" style="left:1220.6px;top:676.34px;font-size:12px;color:#222;">Birth Date_Date</div>
<svg style="left:1194px;top:707.0px" width="16" height="15" viewBox="0 0 16 15"><circle cx="7.6" cy="4.2" r="3.9" fill="#3d6fb6"/><path d="M0.8 14.2C1 10.5 3.5 8.6 7.6 8.6C11.7 8.6 14.2 10.5 14.4 14.2Z" fill="#3d6fb6"/></svg>
<div class="t" style="left:1220.6px;top:708.34px;font-size:12px;color:#222;">Birth Day</div>
<svg style="left:1193px;top:737.0px" width="18" height="17" viewBox="0 0 18 17" fill="none" stroke="#6f6f6f" stroke-width="1.35"><circle cx="12" cy="6" r="5"/><path d="M4.6 6.9A5.1 5.1 0 1 0 11.1 13.3"/><path d="M13.6 4.3C13.2 3.5 10.6 3.4 10.5 4.9C10.4 6.3 13.6 5.9 13.6 7.4C13.6 8.8 10.9 8.8 10.3 7.8" stroke-width="1.25"/><path d="M7.5 10.1C7.1 9.3 4.5 9.2 4.4 10.7C4.3 12.1 7.5 11.7 7.5 13.2C7.5 14.6 4.8 14.6 4.2 13.6" stroke-width="1.25"/></svg>
<div class="t" style="left:1220.6px;top:740.34px;font-size:12px;color:#222;">Carrier Tracking Number</div>
<svg style="left:1193px;top:769.5px" width="18" height="17" viewBox="0 0 18 17" fill="none" stroke="#6e6e6e" stroke-width="1.2" stroke-linejoin="round"><path d="M9 1.2L16.3 4V12.6L9 15.6L1.7 12.6V4Z"/><path d="M1.7 4L9 7L16.3 4M9 7V15.6"/><path d="M5.4 2.6L12.6 5.5" stroke-width="1.1"/></svg>
<div class="t" style="left:1220.6px;top:772.34px;font-size:12px;color:#222;">Chinese Description</div>
<svg style="left:1193px;top:801.0px" width="19" height="17" viewBox="0 0 19 17" fill="none"><path d="M7.6 11V2Q7.6 1.2 8.4 1.2H16.4Q17.2 1.2 17.2 2V12.2Q17.2 13 16.4 13H15.5" stroke="#7a858e" stroke-width="1.2"/><path d="M9.4 3.6H15.2M9.4 5.6H14.2M9.4 7.6H15.2M9.4 9.6H13" stroke="#7a858e" stroke-width="0.9"/><rect x="1.6" y="10.6" width="12" height="5.2" rx="0.9" fill="#fff" stroke="#7a858e" stroke-width="1.2"/><path d="M3.4 12.5H6.6M3.4 13.8H5.6" stroke="#7a858e" stroke-width="0.8"/><path d="M9.6 13.4L10.7 14.4L12.6 12" stroke="#3d6fb6" stroke-width="1.1"/></svg>
<div class="t" style="left:1220.6px;top:804.34px;font-size:12px;color:#222;">City</div>
<div class="a" style="left:1413px;top:822px;width:20px;height:20px;background:#d3e3f5;border-radius:3px"></div>
<svg style="left:1413px;top:822px" width="20" height="20" viewBox="0 0 20 20"><g fill="#bfe3f0" stroke="#6a6a6a" stroke-width="1.1"><rect x="2.4" y="3.5" width="3.2" height="3.2"/><rect x="2.4" y="8.7" width="3.2" height="3.2"/><rect x="2.4" y="14" width="3.2" height="3.2"/></g><path d="M7.2 5.3H18.2M7.2 10.5H18.2M7.2 15.3H18.2" stroke="#a8acb4" stroke-width="1.5"/></svg>
<svg style="left:1441px;top:825px" width="15" height="15" viewBox="0 0 15 15"><rect x="0.5" y="0.5" width="14" height="13.5" fill="#a8d8e8" stroke="#8a8a8a" stroke-width="1"/><path d="M1 6C4 4 8 4 14 7V14H1Z" fill="#5aad6a"/><path d="M1 11L14 10V14H1Z" fill="#2a8a3a"/><rect x="0.5" y="0.5" width="14" height="13.5" fill="none" stroke="#8a8a8a" stroke-width="1"/></svg>

</body></html>
